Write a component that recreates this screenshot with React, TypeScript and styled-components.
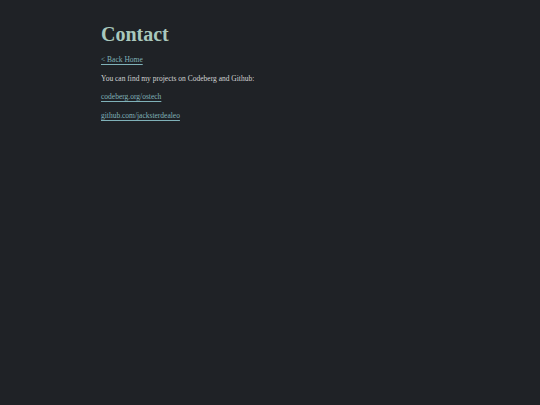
import styled, { createGlobalStyle } from "styled-components";

const GlobalStyle = createGlobalStyle`
  html, body {
    margin: 0;
    padding: 0;
    background-color: #1f2226;
    min-height: 100%;
  }
  body {
    font-family: "Liberation Serif", "Times New Roman", serif;
    color: #d2d4d4;
  }
`;

const Page = styled.main`
  max-width: 338px;
  margin: 0 auto;
  padding-top: 22px;
  min-height: 383px;
`;

const Title = styled.h1`
  margin: 0 0 9px;
  font-size: 20px;
  font-weight: 700;
  line-height: 24px;
  color: #a9c8bd;
`;

const Paragraph = styled.p`
  margin: 0 0 8px;
  font-size: 7.5px;
  line-height: 10.5px;
`;

const Link = styled.a`
  color: #7fb1b8;
  text-decoration: underline;
  text-decoration-thickness: 1px;
  text-underline-offset: 2px;
`;

export default function App() {
  return (
    <>
      <GlobalStyle />
      <Page>
        <Title>Contact</Title>
        <Paragraph>
          <Link href="#">&lt; Back Home</Link>
        </Paragraph>
        <Paragraph>You can find my projects on Codeberg and Github:</Paragraph>
        <Paragraph>
          <Link href="#">codeberg.org/ostech</Link>
        </Paragraph>
        <Paragraph>
          <Link href="#">github.com/jacksterdealeo</Link>
        </Paragraph>
      </Page>
    </>
  );
}
